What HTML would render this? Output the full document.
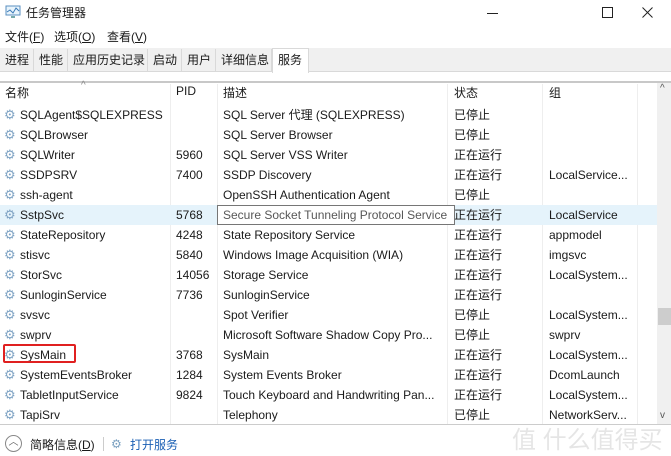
<!DOCTYPE html>
<html><head><meta charset="utf-8"><style>
*{margin:0;padding:0;box-sizing:border-box}
body{width:671px;height:456px;overflow:hidden;background:#fff;font-family:"Liberation Sans","Noto Sans CJK SC",sans-serif;font-size:12px;color:#1a1a1a;position:relative}
.a{position:absolute;white-space:nowrap}
.tab{position:absolute;top:49px;height:22px;line-height:22px;padding-left:5px;border-right:1px solid #d9d9d9}
.row{position:absolute;left:0;width:657px;height:20px;line-height:20px}
.row span{position:absolute;top:0}
.vl{position:absolute;top:84px;height:340px;width:1px;background:#eeeeee}
</style></head><body>
<svg class="a" style="left:5px;top:5px" width="16" height="14" viewBox="0 0 16 14"><rect x="1" y="1" width="14" height="9" fill="#e8f4fc" stroke="#5a8fc0"/><polyline points="2,7 5,5 8,8 11,3 14,6" fill="none" stroke="#3a7ab8"/><rect x="6" y="11" width="4" height="2" fill="#7aa"/></svg>
<div class="a" style="left:26px;top:4px">任务管理器</div>
<div class="a" style="left:487px;top:13px;width:11px;height:1px;background:#222"></div>
<div class="a" style="left:602px;top:7px;width:11px;height:11px;border:1px solid #222"></div>
<svg class="a" style="left:642px;top:7px" width="11" height="11" viewBox="0 0 11 11"><path d="M0.5 0.5L10.5 10.5M10.5 0.5L0.5 10.5" stroke="#222" stroke-width="1"/></svg>
<div class="a" style="left:5px;top:28px">文件(<u>F</u>)</div>
<div class="a" style="left:54px;top:28px">选项(<u>O</u>)</div>
<div class="a" style="left:107px;top:28px">查看(<u>V</u>)</div>
<div class="a" style="left:0;top:48px;width:671px;height:24px;background:#f0f0f0;border-bottom:1px solid #d9d9d9"></div>
<div class="tab" style="left:0;width:34px">进程</div>
<div class="tab" style="left:34px;width:34px">性能</div>
<div class="tab" style="left:68px;width:80px">应用历史记录</div>
<div class="tab" style="left:148px;width:34px">启动</div>
<div class="tab" style="left:182px;width:34px">用户</div>
<div class="tab" style="left:216px;width:56px">详细信息</div>
<div class="tab" style="left:272px;width:37px;top:48px;height:25px;background:#fff;border:1px solid #d9d9d9;border-bottom:none">服务</div>
<div class="a" style="left:0;top:81px;width:671px;height:2px;background:#c8c8c8"></div>
<div class="a" style="left:81px;top:80px;font-size:10px;color:#888">^</div>
<div class="vl" style="left:170px"></div><div class="vl" style="left:217px"></div><div class="vl" style="left:447px"></div><div class="vl" style="left:542px"></div><div class="vl" style="left:637px"></div>
<div class="a" style="left:5px;top:84px">名称</div><div class="a" style="left:176px;top:84px">PID</div><div class="a" style="left:223px;top:84px">描述</div><div class="a" style="left:454px;top:84px">状态</div><div class="a" style="left:549px;top:84px">组</div>
<div class="a" style="left:657px;top:83px;width:14px;height:341px;background:#f0f0f0"></div>
<div class="a" style="left:660px;top:83px;font-size:10px;color:#555">^</div>
<div class="a" style="left:658px;top:308px;width:13px;height:17px;background:#cdcdcd"></div>
<div class="a" style="left:660px;top:410px;font-size:10px;color:#555">v</div>
<div class="a" style="left:0;top:205px;width:657px;height:20px;background:#e5f3fb"></div>
<div id="rows"></div>
<div class="a" style="left:0;top:424px;width:671px;height:1px;background:#ccc"></div>
<div class="a" style="left:5px;top:435px;width:17px;height:17px;border:1px solid #888;border-radius:50%;font-size:10px;line-height:14px;text-align:center;color:#666">︿</div>
<div class="a" style="left:30px;top:436px">简略信息(<u>D</u>)</div>
<div class="a" style="left:103px;top:437px;width:1px;height:14px;background:#ccc"></div>
<div class="a" style="left:111px;top:437px;color:#7aa0c0">⚙</div>
<div class="a" style="left:130px;top:436px;color:#1a5fb4">打开服务</div>
<div class="a" style="left:512px;top:420px;font-size:24px;color:rgba(150,150,150,0.25)">值 什么值得买</div>
<script>
var d=[["SQLAgent$SQLEXPRESS","","SQL Server 代理 (SQLEXPRESS)","已停止",""],["SQLBrowser","","SQL Server Browser","已停止",""],["SQLWriter","5960","SQL Server VSS Writer","正在运行",""],["SSDPSRV","7400","SSDP Discovery","正在运行","LocalService..."],["ssh-agent","","OpenSSH Authentication Agent","已停止",""],["SstpSvc","5768","Secure Socket Tunneling Protocol Service","正在运行","LocalService"],["StateRepository","4248","State Repository Service","正在运行","appmodel"],["stisvc","5840","Windows Image Acquisition (WIA)","正在运行","imgsvc"],["StorSvc","14056","Storage Service","正在运行","LocalSystem..."],["SunloginService","7736","SunloginService","正在运行",""],["svsvc","","Spot Verifier","已停止","LocalSystem..."],["swprv","","Microsoft Software Shadow Copy Pro...","已停止","swprv"],["SysMain","3768","SysMain","正在运行","LocalSystem..."],["SystemEventsBroker","1284","System Events Broker","正在运行","DcomLaunch"],["TabletInputService","9824","Touch Keyboard and Handwriting Pan...","正在运行","LocalSystem..."],["TapiSrv","","Telephony","已停止","NetworkServ..."]];
var h="";d.forEach(function(r,i){var t=105+i*20;h+='<div class="row" style="top:'+t+'px"><span style="left:4px;color:#7fa3c4;font-size:13px">⚙</span><span style="left:20px">'+r[0]+'</span><span style="left:176px">'+r[1]+'</span><span style="left:223px">'+r[2]+'</span><span style="left:454px">'+r[3]+'</span><span style="left:549px">'+r[4]+'</span></div>';});
document.getElementById("rows").innerHTML=h;
</script>
<div class="a" style="left:217px;top:205px;width:238px;height:20px;border:1px solid #767676;background:#fff;color:#575757;line-height:18px;padding-left:5px">Secure Socket Tunneling Protocol Service</div>
<div class="a" style="left:3px;top:344px;width:73px;height:19px;border:2px solid #e02020;border-radius:2px"></div>
</body></html>
